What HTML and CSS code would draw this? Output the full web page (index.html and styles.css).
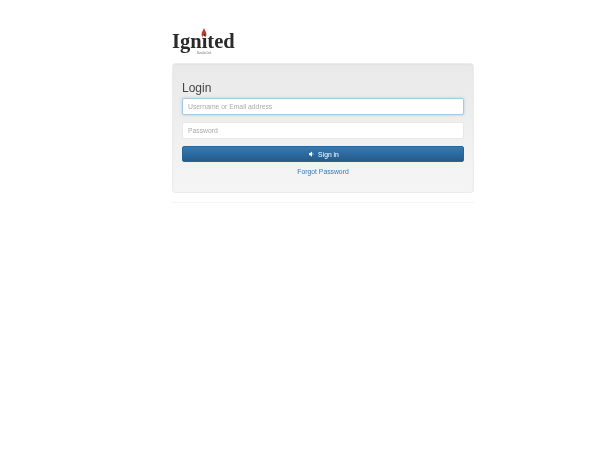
FILE: index.html
```html
<!DOCTYPE html>
<html>
<head>
<title>Login</title>
<link rel="stylesheet" href="styles.css">
</head>
<body>
<div class="container">
	<div class="logo">
		<div class="logo-word">Ignited
			<svg class="flame" width="6" height="10" viewBox="0 0 6 9" preserveAspectRatio="none"><path d="M3 0 C3.6 2 5.6 3.6 5.4 6 C5.2 7.2 4.6 8 4.2 8.6 C4.4 6.8 3.6 5.6 3 5 C2.4 5.6 1.6 6.8 1.8 8.6 C1.4 8 .8 7.2 .6 6 C.4 3.6 2.4 2 3 0 Z" fill="#c0392b"/></svg>
		</div>
		<div class="logo-sub">Results Ltd.</div>
	</div>
	<form class="well">
		<div class="title">Login</div>
		<input class="field focused" type="text" placeholder="Username or Email address">
		<input class="field" type="password" placeholder="Password">
		<button class="btn" type="button">
			<svg class="icon" width="6" height="6" viewBox="0 0 8 7"><path d="M0 2 H1.6 L4 0 V7 L1.6 5 H0 Z" fill="#fff"/><path d="M5 1.6 Q7 3.5 5 5.4 Z" fill="#fff"/></svg>
			Sign in
		</button>
		<a class="forgot" href="#">Forgot Password</a>
	</form>
	<div class="rule"></div>
</div>
</body>
</html>
```

FILE: styles.css
```css
html, body {
	margin: 0;
	padding: 0;
	background-color: #fff;
}
body {
	font-family: "Liberation Sans", Arial, sans-serif;
	color: #333;
}
.container {
	width: 302px;
	margin-left: 172px;
	padding-top: 27px;
	filter: blur(0.6px);
}
.logo {
	height: 36px;
}
.logo-word {
	position: relative;
	width: 64px;
	height: 24px;
	font-family: "Liberation Serif", serif;
	font-size: 20.5px;
	line-height: 28px;
	font-weight: bold;
	color: #2a2a2a;
}
.flame {
	position: absolute;
	left: 29px;
	top: 1px;
}
.logo-sub {
	margin-left: 25px;
	font-family: "Liberation Serif", serif;
	font-size: 3px;
	line-height: 4px;
	color: #666;
}
.well {
	display: flex;
	flex-direction: column;
	box-sizing: border-box;
	height: 130px;
	padding: 16px 9px 0;
	background-image: linear-gradient(to bottom, #e9e9e9, #f5f5f5);
	border: 1px solid #ececec;
	border-radius: 3px;
	box-shadow: inset 0 1px 2px rgba(0,0,0,0.03);
}
.title {
	height: 18px;
	font-size: 12px;
	line-height: 16px;
	color: #444;
}
.field {
	box-sizing: border-box;
	width: 100%;
	height: 17px;
	margin: 0 0 7px;
	padding: 0 5px;
	font-family: "Liberation Sans", Arial, sans-serif;
	font-size: 6.8px;
	background-color: #fff;
	border: 1px solid #e8e8e8;
	border-radius: 2px;
	outline: none;
}
.field::placeholder {
	color: #aaa;
	opacity: 1;
}
.focused {
	border-color: #a5cbe4;
	box-shadow: 0 0 3px rgba(102,175,233,0.5);
}
.btn {
	display: flex;
	align-items: center;
	justify-content: center;
	gap: 3px;
	width: 100%;
	height: 16px;
	padding: 0 0 0 2px;
	font-family: "Liberation Sans", Arial, sans-serif;
	font-size: 6.8px;
	color: #fff;
	background-image: linear-gradient(to bottom, #337ab7, #265a88);
	border: 1px solid #2b6496;
	border-radius: 2px;
}
.forgot {
	margin-top: 5px;
	font-size: 6.8px;
	line-height: 9px;
	text-align: center;
	color: #337ab7;
	text-decoration: none;
}
.rule {
	height: 1px;
	margin-top: 9px;
	background-color: #f4f4f4;
}
```
